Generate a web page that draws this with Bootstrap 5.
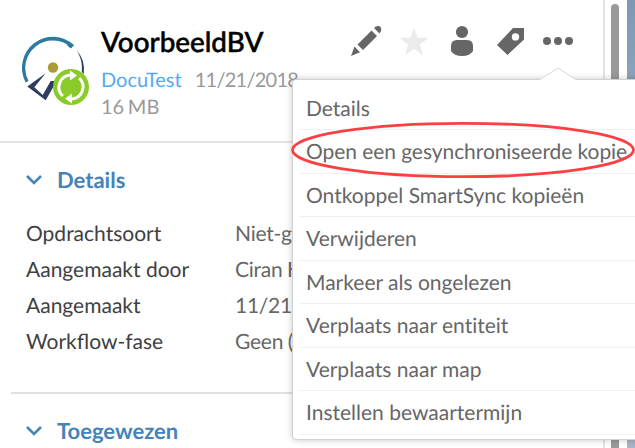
<!DOCTYPE html>
<html lang="nl">
<head>
<meta charset="utf-8">
<meta name="viewport" content="width=device-width, initial-scale=1">
<title>VoorbeeldBV</title>
<link href="https://cdn.jsdelivr.net/npm/bootstrap@5.3.0/dist/css/bootstrap.min.css" rel="stylesheet">
<style>
body{font-family:Lato,"Open Sans",sans-serif;font-size:21px;line-height:27px;color:#404042;background:#fff;text-rendering:geometricPrecision}
svg{display:block;flex:none}
.app{height:448px}
.panel{width:605px;border-right:2px solid #e4e4e4;background:#fff}
.head{height:143px;border-bottom:2px solid #e4e4e4;padding:27px 0 0 20px}
.logo{width:81px;padding-top:8px}
.title{font-size:27.800px;line-height:30px;font-weight:500;color:#000;margin:0 0 10px;-webkit-text-stroke:.5px #000}
.owner{color:#54aaf0}
.meta{color:#999;font-size:20px;word-spacing:-1.5px}
.date{margin-left:13px;letter-spacing:-.75px}
.tools{position:absolute;left:350px;top:24px}
.sect{font-size:22px;font-weight:700;color:#4583b8;line-height:28px;margin:0}
.sect svg{margin-right:15px}
.block-details{padding:23px 0 0 26px;height:249px}
.facts{padding-top:22px}
.facts>div{height:36px;line-height:36px}
.facts dt{width:209px;font-weight:400}
.facts dd{margin:0;color:#666;letter-spacing:-.25px;word-spacing:-.5px}
.block-assigned{margin-left:11px;border-top:2px solid #e0e0e0;padding:23px 0 0 15px}
.gutter{width:22px;padding:4px 0 0 6px}
.thumb{width:8px;height:444px;background:#999;border-radius:4px 4px 0 0}
.backdrop{background:linear-gradient(#7e98b5,#8ba3bb 18%,#a9b5c3)}
.actions{left:292px;top:79px;width:360px;height:361px;border:1px solid #d2d2d2;border-radius:4px;box-shadow:0 0 7px rgba(0,0,0,.22);background:#fff;padding:7px 0 0 6px}
.actions .list-group-item{height:43.45px;line-height:43px;padding:0 0 0 7px;border:0;border-bottom:1px solid #eff0f5;border-radius:0;color:#666;background:none;white-space:nowrap;font-variant-ligatures:none}
.actions .list-group-item:nth-child(2){letter-spacing:-.07px}
.tip{left:540px;top:67px}
.ring{left:290px;top:119px}
</style>
<script src="https://cdn.jsdelivr.net/npm/bootstrap@5.3.0/dist/js/bootstrap.bundle.min.js"></script>
</head>
<body>
<div class="app d-flex position-relative overflow-hidden">
  <main class="panel flex-shrink-0">
    <header class="head d-flex">
      <div class="logo">
        <svg width="70" height="72" viewBox="20 35 70 72">
          <path d="M25.700 82.500A31 31 0 0 1 74 45L71 47.500A27.500 27.500 0 0 0 28.500 81Z" fill="#2b7a9f"/>
          <path d="M70 44.500L74 45L71 48.500L67 45.500Z" fill="#2b7a9f"/>
          <path d="M76.500 50Q85.500 60 83.800 74L81.800 72Q83 60 76.500 50Z" fill="#2d3c60"/>
          <path d="M45.700 73.300L27.300 86.500L45.700 100.300L55 84V81H50.700L42.700 95L34.300 87.300Z" fill="#2d3c60"/>
          <circle cx="53" cy="67.500" r="5.200" fill="#a99c35"/>
          <circle cx="71" cy="87" r="18" fill="#8bcb29"/>
          <g fill="none" stroke="#fff" stroke-width="3"><path d="M62.800 96A12.200 12.200 0 0 1 70 75"/><path d="M79.200 78A12.200 12.200 0 0 1 72 99"/></g>
          <path d="M70 70.500L77 75.500L70 80.500ZM72 93.500L65 98.500L72 103.500Z" fill="#fff"/>
        </svg>
      </div>
      <div>
        <h1 class="title">VoorbeeldBV</h1>
        <div class="meta"><span class="owner">DocuTest</span><span class="date">11/21/2018</span></div>
        <div class="meta">16 MB</div>
      </div>
      <div class="tools">
        <svg width="226" height="36" viewBox="350 24 226 36" fill="#666">
          <path d="M351 56L354.500 46.500L360 52.200ZM357.500 44.500L371.500 30.500L377 36L363 50ZM374 28Q376 25.500 379 26Q382 27 381 31L379.500 33.500Z"/>
          <path fill="#ebebeb" d="M414 27L417.600 37.700H428.700L419.900 44.400L423.200 55.200L414 48.700L404.800 55.200L408.100 44.400L399.300 37.700H410.400Z"/>
          <circle cx="462" cy="32" r="6.100"/>
          <path d="M457 40H467Q473 40 473 46V51Q470 56 462 56Q454 56 451 51V46Q451 40 457 40Z"/>
          <path fill-rule="evenodd" d="M497 45L513 28H524V39.500L507.500 55ZM515.500 33.200A3.700 3.700 0 1 0 515.500 40.600A3.700 3.700 0 1 0 515.500 33.200Z"/>
          <circle cx="547" cy="41" r="4"/><circle cx="558" cy="41" r="4"/><circle cx="569" cy="41" r="4"/>
        </svg>
      </div>
    </header>
    <section class="block-details">
      <h2 class="sect d-flex align-items-center"><svg width="16" height="12" viewBox="0 0 16 12" fill="none" stroke="#4583b8" stroke-width="2.600"><path d="M1 2L8 9L15 2"/></svg>Details</h2>
      <dl class="facts m-0">
        <div class="d-flex"><dt>Opdrachtsoort</dt><dd>Niet-g</dd></div>
        <div class="d-flex"><dt>Aangemaakt door</dt><dd>Ciran K</dd></div>
        <div class="d-flex"><dt>Aangemaakt</dt><dd>11/21/</dd></div>
        <div class="d-flex"><dt>Workflow-fase</dt><dd>Geen (</dd></div>
      </dl>
    </section>
    <section class="block-assigned">
      <h2 class="sect d-flex align-items-center"><svg width="16" height="12" viewBox="0 0 16 12" fill="none" stroke="#4583b8" stroke-width="2.600"><path d="M1 2L8 9L15 2"/></svg>Toegewezen</h2>
    </section>
  </main>
  <div class="gutter flex-shrink-0"><div class="thumb"></div></div>
  <div class="backdrop flex-fill"></div>
  <div class="actions list-group position-absolute">
    <a class="list-group-item">Details</a>
    <a class="list-group-item">Open een gesynchroniseerde kopie</a>
    <a class="list-group-item">Ontkoppel SmartSync kopieën</a>
    <a class="list-group-item">Verwijderen</a>
    <a class="list-group-item">Markeer als ongelezen</a>
    <a class="list-group-item">Verplaats naar entiteit</a>
    <a class="list-group-item">Verplaats naar map</a>
    <a class="list-group-item">Instellen bewaartermijn</a>
  </div>
  <svg class="tip position-absolute" width="37" height="14"><path d="M0 12.500L18 1L36 12.500V14H0Z" fill="#fff"/><path d="M0 12.500L18 1L36 12.500" fill="none" stroke="#d8d8d8"/></svg>
  <svg class="ring position-absolute" width="345" height="61"><ellipse cx="173" cy="31" rx="170.500" ry="26.700" fill="none" stroke="#fc4042" stroke-width="2.800"/></svg>
</div>
</body>
</html>
